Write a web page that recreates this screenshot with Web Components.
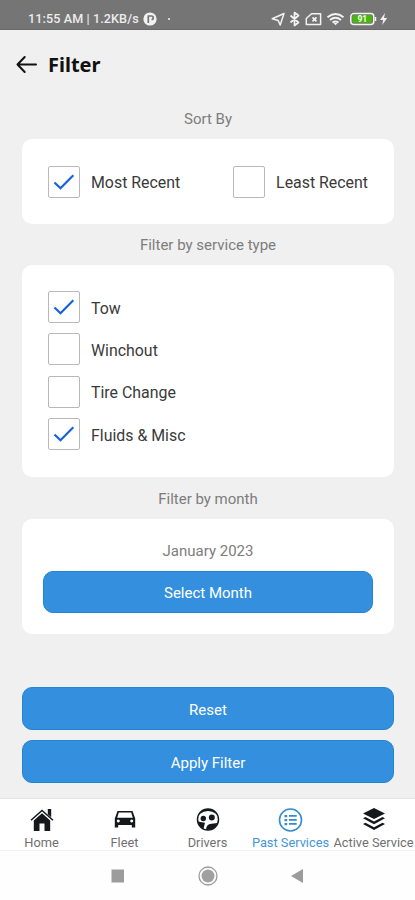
<!DOCTYPE html>
<html lang="en">
<head>
<meta charset="utf-8">
<title>Filter</title>
<style>
html,body{margin:0;height:100%;background:#f0f0f0;overflow:hidden}
body{font-family:Roboto,"Liberation Sans",sans-serif}
</style>
</head>
<body>
<filter-screen></filter-screen>
<script>
const define = (name, html, setup) => customElements.define(name, class extends HTMLElement {
  connectedCallback() {
    if (this.shadowRoot) return;
    const t = document.createElement('template');
    t.innerHTML = html;
    this.attachShadow({mode: 'open'}).appendChild(t.content.cloneNode(true));
    if (setup) setup(this, this.shadowRoot);
  }
});

define('status-bar', `
<style>
:host{display:flex;height:30px;box-sizing:border-box;background:#757575;color:#ececec;padding:9px 26px 0 28px;justify-content:space-between;border-bottom:1px solid #6a6a6a}
span{font-size:12.600px;line-height:20px;font-weight:500;letter-spacing:.1px;white-space:nowrap}
div{display:flex;height:20px;align-items:center}
svg{display:block;flex:none}
</style>
<div><span>11:55 AM | 1.2KB/s</span>
<svg width="34" height="16" viewBox="0 0 34 16" style="margin-left:4px"><circle cx="7" cy="8" r="6.600" fill="#f2f2f2"/><path d="M5.300 12V5h3.200a1.700 1.700 0 0 1 0 3.500" fill="none" stroke="#757575" stroke-width="1.700"/><circle cx="26" cy="8" r="1" fill="#f2f2f2"/></svg></div>
<svg width="118" height="20" viewBox="0 0 118 20" fill="none" stroke="#f2f2f2" stroke-width="1.500" stroke-linejoin="round">
<path d="M1.200 9.800 13 4.500 9.200 16 7.200 11.500Z"/>
<path d="M19.500 6.500 27.500 13.500 23.500 16.500V3.500L27.500 6.500 19.500 13.500" stroke-width="1.700"/>
<path d="M40.500 4.800H49.600V15.500H35.300V9.500Z"/><path d="m41.500 8.300 4 4m0-4-4 4" stroke-width="1.800"/>
<path d="M56.500 8.200q8-6.400 16 0M59 11q5.500-4.300 11 0M61.500 13.600q3-2.200 6 0" stroke-width="1.900"/><path d="m62.500 14 2 2.200 2-2.200z" fill="#f2f2f2" stroke="none"/>
<rect x="79.800" y="4.600" width="23" height="10.800" rx="3"/><rect x="81.500" y="6.300" width="19.500" height="7.400" rx="1" fill="#49b60b" stroke="none"/><path d="M104.500 8v4"/>
<text x="91.300" y="13" text-anchor="middle" fill="#f4ffe9" stroke="none" font-size="8.500" font-weight="700">91</text>
<path d="m114 4-5 7h3.200l-1 5 5-7H113z" fill="#f2f2f2" stroke="none"/>
</svg>`);

define('page-header', `
<style>
:host{display:flex;height:70px;align-items:center;padding-left:16px;box-sizing:border-box;gap:11px;color:#111}
h1{margin:0;font:700 20px/28px "Noto Sans",sans-serif}
svg{display:block}
</style>
<svg width="21" height="20" viewBox="0 0 21 20" fill="none" stroke="#111" stroke-width="2" stroke-linecap="round" stroke-linejoin="round"><path d="M20 9.500H1.500M8.700 2 1.500 9.500l7.200 7.500"/></svg>
<h1><slot></slot></h1>`);

define('section-title', `
<style>:host{display:flex;justify-content:center;align-items:center;color:#7d7d7d;font-size:15px;line-height:20px}</style>
<span><slot></slot></span>`);

define('rounded-card', `
<style>:host{display:flex;background:#fff;border-radius:10px;box-sizing:border-box}</style>
<slot></slot>`);

define('check-option', `
<style>
:host{display:flex;align-items:center;gap:11px;color:#3a3a3a;font-size:15.900px;line-height:20px;white-space:nowrap}
i{display:block;width:32px;height:32px;box-sizing:border-box;border:1.500px solid #b9b9b9;border-radius:2px;flex:none}
span{padding-top:3px}
svg{display:none;width:100%;height:100%}
:host([checked]) svg{display:block}
</style>
<i><svg viewBox="0 0 30 30" fill="none" stroke="#1660e4" stroke-width="2.200"><path d="m5.500 15.500 6 5.800L24.300 8.300"/></svg></i>
<span><slot></slot></span>`);

define('action-button', `
<style>
:host{display:flex}
button{flex:1;height:42.500px;box-sizing:border-box;border:1px solid #1e86d2;border-radius:10px;background:#348fde;color:#fff;font:400 15px Roboto,sans-serif;padding:3px 0 0}
</style>
<button><slot></slot></button>`);

const icons = {
home: '<path d="M2 13.200 13 3.500l11 9.700" fill="none" stroke="#15191c" stroke-width="1.500"/><path d="M18.800 2h3.400v8.300l-3.400-3zM4.800 13.600 13 6.300l8.200 7.300V24h-5.700v-7.500h-5V24H4.800z"/>',
fleet: '<path fill-rule="evenodd" d="M5.500 4h15l2.700 7.500v8.900h-3.400V18H6.200v2.400H2.800v-8.900zM6.800 5.600 5.200 10.800h15.600l-1.600-5.200zM6.300 12.500a1.500 1.500 0 1 0 .01 0zM19.700 12.500a1.500 1.500 0 1 0 .01 0z"/>',
drivers: '<circle cx="13" cy="12.500" r="10.500" fill="#fff" stroke="#15191c" stroke-width="1.500"/><path d="M5 7q3-5 8-5t8 5q-3.500-3-8-3T5 7z"/><circle cx="8.300" cy="11.500" r="2.700"/><circle cx="16.800" cy="10.500" r="3"/><path d="M3 14.500q4 1 7 1.200L8.500 21.800Q4 20 3 14.500zM11 23q0-6 5.500-6.300l6-.7q-2.500 7.300-11.500 7z"/>',
past: '<circle cx="12.500" cy="13" r="11" fill="none" stroke="#348bcf" stroke-width="1.600"/><path d="M6.500 8h2.700v2.200H6.500zm4.500 0h7.700v1.800H11zM6.500 12h2.700v2.200H6.500zm4.500 0h7.700v1.800H11zM6.500 16h2.700v2.200H6.500zm4.500 0h7.700v1.800H11z" fill="#348bcf"/>',
active: '<path d="M13 1 24 6.500 13 12 2 6.500zM2 11.300l2.500-1.200L13 14.600l8.500-4.500 2.500 1.200-11 5.900zM2 17l2.500-1.200 8.500 4.500 8.500-4.500L24 17l-11 6z"/>'
};
define('tab-item', `
<style>
:host{display:flex;flex-direction:column;align-items:center;width:83px;color:#707070;font-size:12.800px;line-height:16px;white-space:nowrap;padding-top:8px;box-sizing:border-box}
:host([active]){color:#4496d6}
svg{width:26px;height:26px;fill:#15191c;margin-bottom:2px;flex:none}
</style>
<svg viewBox="0 0 26 26"></svg><span><slot></slot></span>`, (el, root) => {
  root.querySelector('svg').innerHTML = icons[el.getAttribute('icon')];
});

define('tab-bar', `
<style>:host{display:flex;height:53px;background:#fff;border-top:1px solid #e3e3e3;border-bottom:1px solid #f4f4f4;box-sizing:border-box}</style>
<slot></slot>`);

define('system-nav', `
<style>:host{display:flex;flex:1;background:#fefefe;justify-content:center;padding-top:13px;gap:72px}svg{display:block;flex:none}</style>
<svg width="14" height="24"><rect x=".5" y="5.500" width="12.500" height="13" fill="#9c9c9c"/></svg>
<svg width="22" height="24"><circle cx="11" cy="12" r="9" fill="none" stroke="#9c9c9c" stroke-width="1.300"/><circle cx="11" cy="12" r="6.500" fill="#a0a0a0"/></svg>
<svg width="14" height="24"><path d="M0 12 12 5v14z" fill="#9c9c9c"/></svg>`);

define('filter-screen', `
<style>
:host{display:flex;flex-direction:column;width:415px;height:900px;background:#f0f0f0}
main{display:flex;flex-direction:column;padding:8px 21px 0 22px;height:698px;box-sizing:border-box}
section-title{height:22px}
.sort{height:85px;margin:9px 0 10px;padding:0 26px;align-items:center;justify-content:space-between}
.types{height:212px;margin:9px 0 10.500px;padding:26px;flex-direction:column;gap:10.400px}
.month{height:115px;margin:9px 0 53.500px;padding:21px 21px 0;flex-direction:column;gap:9px}
.apply{margin-top:10.500px}
</style>
<status-bar></status-bar>
<page-header>Filter</page-header>
<main>
<section-title>Sort By</section-title>
<rounded-card class="sort"><check-option checked>Most Recent</check-option><check-option>Least Recent</check-option></rounded-card>
<section-title>Filter by service type</section-title>
<rounded-card class="types"><check-option checked>Tow</check-option><check-option>Winchout</check-option><check-option>Tire Change</check-option><check-option checked>Fluids &amp; Misc</check-option></rounded-card>
<section-title>Filter by month</section-title>
<rounded-card class="month"><section-title>January 2023</section-title><action-button>Select Month</action-button></rounded-card>
<action-button>Reset</action-button>
<action-button class="apply">Apply Filter</action-button>
</main>
<tab-bar><tab-item icon="home">Home</tab-item><tab-item icon="fleet">Fleet</tab-item><tab-item icon="drivers">Drivers</tab-item><tab-item icon="past" active>Past Services</tab-item><tab-item icon="active">Active Service</tab-item></tab-bar>
<system-nav></system-nav>`);
</script>
</body>
</html>
